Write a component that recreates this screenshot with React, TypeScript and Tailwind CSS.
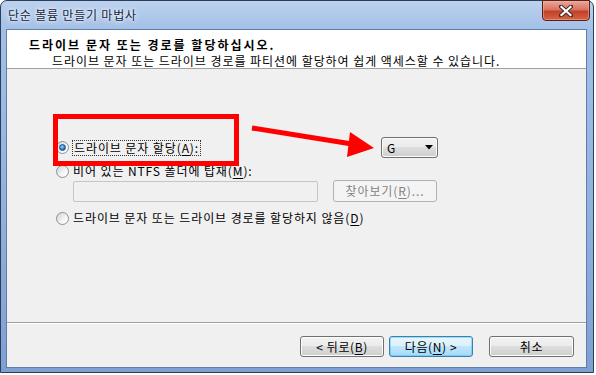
import React from 'react';

const Radio = ({ checked }: { checked?: boolean }) => (
  <span className="flex h-[13px] w-[13px] shrink-0 items-center justify-center rounded-full border border-[#8e8f8f] bg-[linear-gradient(135deg,#d2d2d2,#f6f6f6_60%,#ffffff)]">
    {checked && (
      <span className="h-[7px] w-[7px] rounded-full border border-[#1b4f87] bg-[radial-gradient(circle_at_40%_35%,#9ad8fb,#2a83cc_55%,#0e4a8c)]" />
    )}
  </span>
);

interface BtnProps {
  children: React.ReactNode;
  primary?: boolean;
  disabled?: boolean;
  spread?: boolean;
  className?: string;
}

const Btn: React.FC<BtnProps> = ({ children, primary, disabled, spread, className = '' }) => {
  let look =
    'border-[#707070] bg-[linear-gradient(#f2f2f2_0%,#ebebeb_50%,#dddddd_50%,#cfcfcf_100%)] shadow-[inset_0_0_0_1px_#fcfcfc] text-black';
  if (primary)
    look =
      'border-[#3c7fb1] bg-[linear-gradient(#eaf6fd_0%,#d9f0fc_50%,#bee6fd_50%,#a7d9f5_100%)] shadow-[inset_0_0_0_1px_#48c2ff80] text-black';
  if (disabled) look = 'border-[#adb2b5] bg-[#f4f4f4] text-[#838383]';
  return (
    <div
      className={`flex h-[21px] items-center rounded-[3px] border ${spread ? 'justify-between' : 'justify-center'} ${look} ${className}`}
    >
      {children}
    </div>
  );
};

const U = ({ children }: { children: React.ReactNode }) => <span className="underline underline-offset-2">{children}</span>;

export default function App() {
  return (
    <div className="relative h-[375px] w-[596px] overflow-hidden bg-white font-['Noto_Sans_CJK_KR','Noto_Sans',sans-serif] text-[12px] leading-none text-black">
      {/* window frame */}
      <div className="flex h-[373px] w-[594px] flex-col rounded-t-[7px] border border-[#2c3d57] bg-[linear-gradient(180deg,#bcd2ef_0%,#a3bfe6_8%,#8fb0dd_60%,#7e9fd2_100%)]">
        {/* title bar */}
        <div className="relative flex h-[28px] shrink-0 items-center pl-[7px]">
          <span className="text-[12px] tracking-[0.8px] text-[#13243d] [text-shadow:0_0_6px_#ffffff,0_0_3px_#ffffff]">
            단순 볼륨 만들기 마법사
          </span>
          <div className="absolute right-[3px] top-[-1px] flex h-[21px] w-[48px] items-center justify-center rounded-b-[4px] border border-[#5a1f1a] bg-[linear-gradient(180deg,#eaa79a_0%,#d9735f_45%,#c4402c_55%,#d6653f_100%)] shadow-[inset_0_0_0_1px_#f0b8aa80]">
            <svg width="14" height="12" viewBox="0 0 14 12">
              <path d="M2 1.5 L12 10.5 M12 1.5 L2 10.5" stroke="#3a2a2a" strokeWidth="4" strokeLinecap="square" />
              <path d="M2.5 2 L11.5 10 M11.5 2 L2.5 10" stroke="#ffffff" strokeWidth="2.2" strokeLinecap="square" />
            </svg>
          </div>
        </div>

        {/* client area */}
        <div className="ml-[5px] mr-[6px] flex h-[339px] shrink-0 flex-col border border-[#5f7ea8] bg-[#f0f0f0]">
          {/* header */}
          <div className="h-[39px] shrink-0 border-b border-[#a0a0a0] bg-white">
            <div className="pl-[22px] pt-[9px] text-[12px] font-bold tracking-[2px]">드라이브 문자 또는 경로를 할당하십시오.</div>
            <div className="pl-[45px] pt-[4px] tracking-[0.95px]">
              드라이브 문자 또는 드라이브 경로를 파티션에 할당하여 쉽게 액세스할 수 있습니다.
            </div>
          </div>

          {/* body */}
          <div className="h-[254px] shrink-0 border-b border-[#a0a0a0] pt-[68px] tracking-[0.9px]">
            <div className="flex h-[21px] items-center pl-[49px]">
              <Radio checked />
              <div className="flex w-[312px] items-center pl-[3px]">
                <span className="border border-dotted border-[#333] px-[1px] py-[1px]">
                  드라이브 문자 할당(<U>A</U>):
                </span>
              </div>
              <Btn spread className="w-[57px] pl-[5px] pr-[4px]">
                <span>G</span>
                <svg width="8" height="5" viewBox="0 0 8 5">
                  <path d="M0 0 H8 L4 4.5 Z" fill="#000" />
                </svg>
              </Btn>
            </div>

            <div className="mt-[5px] flex h-[16px] items-center pl-[49px]">
              <Radio />
              <span className="pl-[4px]">
                비어 있는 NTFS 폴더에 탑재(<U>M</U>):
              </span>
            </div>

            <div className="mt-[1px] flex h-[22px] items-center pl-[66px]">
              <div className="h-[21px] w-[245px] rounded-[2px] border border-[#c3c6c9] bg-[#f0f0f0]" />
              <Btn disabled className="ml-[15px] h-[22px] w-[104px]">
                찾아보기(<U>R</U>)...
              </Btn>
            </div>

            <div className="mt-[8px] flex h-[16px] items-center pl-[49px]">
              <Radio />
              <span className="pl-[4px]">
                드라이브 문자 또는 드라이브 경로를 할당하지 않음(<U>D</U>)
              </span>
            </div>
          </div>

          {/* footer */}
          <div className="flex flex-1 border-t border-white pl-[293px] pt-[12px] tracking-[0.6px]">
            <Btn className="h-[20px] w-[84px]">
              &lt; 뒤로(<U>B</U>)
            </Btn>
            <Btn primary className="ml-[5px] h-[20px] w-[84px]">
              다음(<U>N</U>) &gt;
            </Btn>
            <Btn className="ml-[16px] h-[20px] w-[85px]">취소</Btn>
          </div>
        </div>
      </div>

      {/* annotation: red box */}
      <div className="pointer-events-none absolute left-[53px] top-[114px] h-[52px] w-[186px] border-[5px] border-[#ff0000]" />

      {/* annotation: red arrow */}
      <svg className="pointer-events-none absolute left-0 top-0" width="596" height="375" viewBox="0 0 596 375">
        <line x1="252" y1="128" x2="352" y2="144" stroke="#ff0000" strokeWidth="5" />
        <polygon points="350,132 374,148 347,157" fill="#ff0000" />
      </svg>
    </div>
  );
}
